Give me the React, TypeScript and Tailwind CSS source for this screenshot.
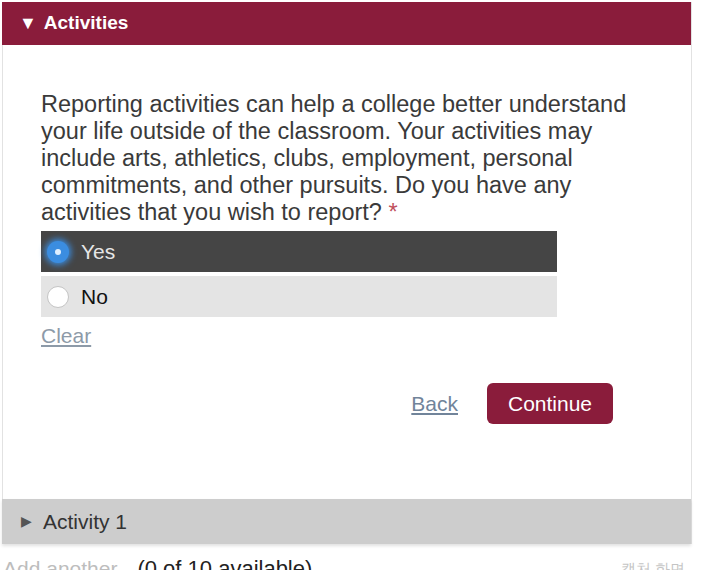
import React, { useState } from "react";

const App: React.FC = () => {
  const [answer, setAnswer] = useState<"yes" | "no" | null>("yes");

  const rowClass = (on: boolean) =>
    on
      ? "h-[41px] flex items-center pl-[6px] bg-[#454545] text-[#e6e6e6] text-[21px]"
      : "h-[41px] flex items-center pl-[6px] bg-[#e4e4e4] text-[#111] text-[21px]";

  const radio = (on: boolean) =>
    on ? (
      <span className="w-[22px] h-[22px] rounded-full bg-[#3b8de0] shadow-[0_0_6px_2px_#3b8de0] flex items-center justify-center">
        <span className="w-[6px] h-[6px] rounded-full bg-[#dfefff]" />
      </span>
    ) : (
      <span className="w-[22px] h-[22px] rounded-full bg-white border border-[#c4c4c4]" />
    );

  return (
    <div className="w-[711px] h-[570px] overflow-hidden bg-white font-['Liberation_Sans',Arial,sans-serif] text-[#333]">
      <div className="ml-[2px] mt-[2px] w-[690px] border-r border-[#e2e2e2]">
        {/* section header */}
        <div className="h-[43px] bg-[#8a1c3b] flex items-center pl-[17px] text-white font-bold text-[19px]">
          <span className="text-[18px] mr-[7px]">▼</span>
          <span>Activities</span>
        </div>

        <div className="border-l border-[#e2e2e2] pt-[46px] pl-[38px] pr-[78px] pb-[75px]">
          <p className="text-[23.5px] leading-[27px] text-[#3a3a3a] whitespace-nowrap">
            Reporting activities can help a college better understand
            <br />
            your life outside of the classroom. Your activities may
            <br />
            include arts, athletics, clubs, employment, personal
            <br />
            commitments, and other pursuits. Do you have any
            <br />
            activities that you wish to report?{" "}
            <span className="text-[#c0505c]">*</span>
          </p>

          <div className="mt-[5px] w-[516px] flex flex-col gap-[4px]">
            <button onClick={() => setAnswer("yes")} className={rowClass(answer === "yes")}>
              {radio(answer === "yes")}
              <span className="ml-[12px]">Yes</span>
            </button>
            <button onClick={() => setAnswer("no")} className={rowClass(answer === "no")}>
              {radio(answer === "no")}
              <span className="ml-[12px]">No</span>
            </button>
          </div>

          <div className="mt-[7px] leading-[24px]">
            <a
              href="#"
              onClick={() => setAnswer(null)}
              className="text-[21px] text-[#8d9aa8] underline"
            >
              Clear
            </a>
          </div>

          <div className="mt-[33px] flex justify-end items-center gap-[29px]">
            <a href="#" className="text-[21px] text-[#71849a] underline">
              Back
            </a>
            <button className="h-[41px] w-[126px] rounded-[6px] bg-[#8a1c3b] text-white text-[21px]">
              Continue
            </button>
          </div>
        </div>

        {/* collapsed activity */}
        <div className="h-[45px] bg-[#cdcdcd] flex items-center pl-[19px] text-[21px] text-[#333] shadow-[0_2px_3px_rgba(0,0,0,0.12)]">
          <span className="text-[14px] text-[#555] mr-[11px]">▶</span>
          <span>Activity 1</span>
        </div>
      </div>

      <div className="mt-[12px] pl-[3px] pr-[26px] flex items-center text-[22px] leading-[26px]">
        <span className="text-[#bdbdbd] text-[21px]">Add another</span>
        <span className="ml-[20px] text-[#222]">(0 of 10 available)</span>
        <span className="ml-auto text-[#c4c4c4] text-[15px]">캡처 화면</span>
      </div>
    </div>
  );
};

export default App;
